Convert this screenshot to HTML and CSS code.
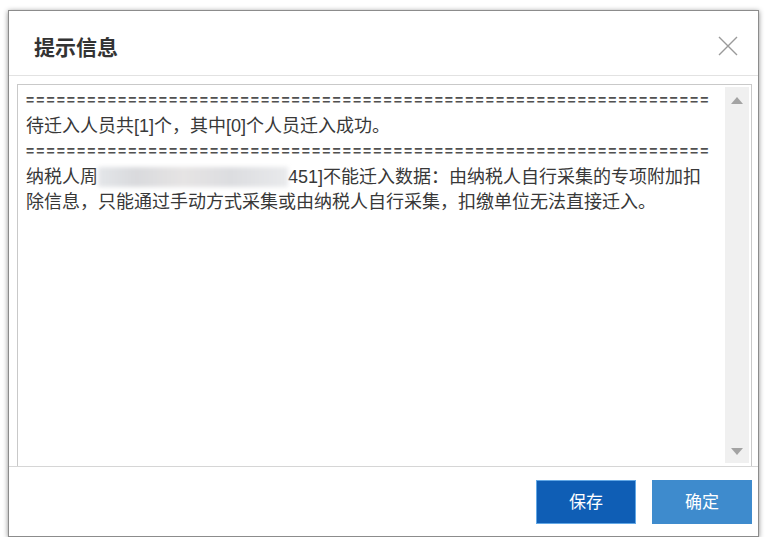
FILE: index.html
```html
<!DOCTYPE html>
<html lang="zh-CN">

<head>
    <meta charset="UTF-8">
    <meta name="viewport" content="width=device-width, initial-scale=1.0">
    <title>提示信息</title>
    <link rel="stylesheet" href="styles.css">
</head>

<body>
    <div class="dialog">
        <div class="dialog-header">
            <span class="dialog-title">提示信息</span>
            <button class="dialog-close" type="button" aria-label="关闭">
                <svg width="20" height="20" viewBox="0 0 20 20">
                    <path d="M1 1 L19 19 M19 1 L1 19" stroke="#9a9a9a" stroke-width="1.4" fill="none" />
                </svg>
            </button>
        </div>
        <div class="dialog-body">
            <div class="message-box">
                <div class="message-text">
                    <div class="line rule">===================================================================</div>
                    <div class="line">待迁入人员共[1]个，其中[0]个人员迁入成功。</div>
                    <div class="line rule">===================================================================</div>
                    <div class="line">纳税人周<span class="masked"></span>451]不能迁入数据：由纳税人自行采集的专项附加扣</div>
                    <div class="line">除信息，只能通过手动方式采集或由纳税人自行采集，扣缴单位无法直接迁入。</div>
                </div>
                <div class="scrollbar">
                    <span class="arrow arrow-up"></span>
                    <span class="arrow arrow-down"></span>
                </div>
            </div>
        </div>
        <div class="dialog-footer">
            <button class="btn btn-save" type="button">保存</button>
            <button class="btn btn-ok" type="button">确定</button>
        </div>
    </div>
</body>

</html>
```

FILE: styles.css
```css
body {
    margin: 0;
    padding: 0;
    background-color: #ffffff;
    font-family: "Liberation Sans", "Noto Sans CJK SC", sans-serif;
    color: #333333;
}

.dialog {
    margin: 10px 0 0 8px;
    width: 749px;
    height: 525px;
    border: 1px solid #8c8c8c;
    background-color: #ffffff;
    box-shadow: 0 1px 5px rgba(0, 0, 0, 0.45);
    display: flex;
    flex-direction: column;
}

.dialog-header {
    height: 65px;
    border-bottom: 1px solid #e2e2e2;
    display: flex;
    align-items: center;
    justify-content: space-between;
    padding: 5px 20px 0 25px;
    box-sizing: border-box;
}

.dialog-title {
    font-size: 21px;
    font-weight: 700;
    color: #333333;
}

.dialog-close {
    border: none;
    background: none;
    padding: 0;
    width: 20px;
    height: 20px;
    cursor: pointer;
}

.dialog-body {
    flex: 1;
    padding: 8px 6px 0 8px;
    display: flex;
    min-height: 0;
}

.message-box {
    flex: 1;
    display: flex;
    border: 1px solid #c9c9c9;
    border-bottom: none;
    padding: 2px 2px 3px 8px;
}

.message-text {
    flex: 1;
    font-size: 18px;
    line-height: 25.6px;
    color: #383838;
    padding-top: 1px;
    white-space: nowrap;
    overflow: hidden;
}

/* separator row: narrower glyphs, same pitch, so the dashes show gaps */
.rule {
    font-size: 14px;
    font-weight: 700;
    letter-spacing: 2.04px;
    color: #505050;
}

.masked {
    display: inline-block;
    width: 190px;
    height: 20px;
    vertical-align: -4px;
    background: linear-gradient(90deg, #e4e6e9, #d9dadd 20%, #e6e4e4 45%, #dcdde0 70%, #e9eaec);
    filter: blur(2px);
}

.scrollbar {
    width: 24px;
    background-color: #f0f0f0;
    display: flex;
    flex-direction: column;
    justify-content: space-between;
    align-items: center;
    padding: 10px 0 8px;
}

.arrow {
    width: 0;
    height: 0;
    border-left: 6px solid transparent;
    border-right: 6px solid transparent;
}

.arrow-up {
    border-bottom: 7px solid #a3a3a3;
}

.arrow-down {
    border-top: 7px solid #a3a3a3;
}

.dialog-footer {
    height: 70px;
    border-top: 1px solid #d6d6d6;
    display: flex;
    justify-content: flex-end;
    align-items: flex-start;
    gap: 16px;
    padding: 13px 6px 0 0;
    box-sizing: border-box;
}

.btn {
    width: 100px;
    height: 44px;
    padding: 0 0 3px;
    font-family: "Noto Sans CJK SC", sans-serif;
    font-size: 17px;
    color: #ffffff;
    cursor: pointer;
}

.btn-save {
    background-color: #0f5eb5;
    border: 1px solid #62a8e6;
}

.btn-ok {
    background-color: #3e8bcd;
    border: 1px solid #3e8bcd;
}
```
